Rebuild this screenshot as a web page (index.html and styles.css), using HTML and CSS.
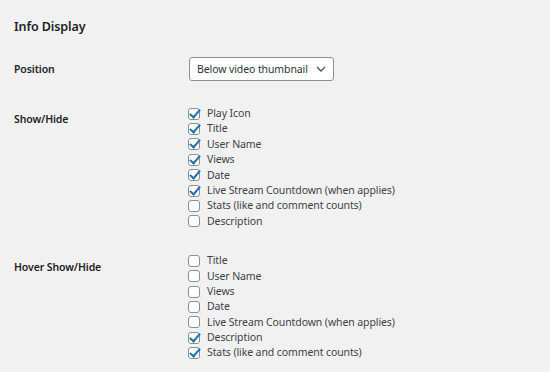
FILE: index.html
```html
<!DOCTYPE html>
<html lang="en">
<head>
    <meta charset="UTF-8">
    <meta name="viewport" content="width=device-width, initial-scale=1.0">
    <title>Info Display</title>
    <link rel="stylesheet" href="styles.css">
</head>
<body>
    <div class="wrap">
        <h2>Info Display</h2>

        <div class="row row-select">
            <div class="label">Position</div>
            <div class="field">
                <div class="select">
                    <span>Below video thumbnail</span>
                    <svg class="chev" width="10" height="6" viewBox="0 0 10 6"><path d="M1 1l4 4 4-4" fill="none" stroke="#50575e" stroke-width="1.4"/></svg>
                </div>
            </div>
        </div>

        <div class="row row-show">
            <div class="label">Show/Hide</div>
            <ul class="checks">
                <li class="on"><i class="box"></i>Play Icon</li>
                <li class="on"><i class="box"></i>Title</li>
                <li class="on"><i class="box"></i>User Name</li>
                <li class="on"><i class="box"></i>Views</li>
                <li class="on"><i class="box"></i>Date</li>
                <li class="on"><i class="box"></i>Live Stream Countdown (when applies)</li>
                <li><i class="box"></i>Stats (like and comment counts)</li>
                <li><i class="box"></i>Description</li>
            </ul>
        </div>

        <div class="row row-hover">
            <div class="label">Hover Show/Hide</div>
            <ul class="checks">
                <li><i class="box"></i>Title</li>
                <li><i class="box"></i>User Name</li>
                <li><i class="box"></i>Views</li>
                <li><i class="box"></i>Date</li>
                <li><i class="box"></i>Live Stream Countdown (when applies)</li>
                <li class="on"><i class="box"></i>Description</li>
                <li class="on"><i class="box"></i>Stats (like and comment counts)</li>
            </ul>
        </div>
    </div>
</body>
</html>
```

FILE: styles.css
```css
* {
    margin: 0;
    padding: 0;
    box-sizing: border-box;
}

body {
    background: #f1f1f1;
    font-family: "Noto Sans", "Open Sans", Arial, sans-serif;
    font-size: 10.5px;
    letter-spacing: -0.1px;
    color: #3c434a;
    overflow: hidden;
}

.wrap {
    padding: 17px 14px 0;
}

h2 {
    font-size: 12.5px;
    font-weight: 600;
    line-height: 20px;
    color: #1d2327;
}

.row {
    display: flex;
}

.label {
    width: 174px;
    flex: none;
    font-weight: 600;
    line-height: 16px;
    color: #1d2327;
}

.row-select {
    margin-top: 20px;
    align-items: center;
}

.select {
    width: 145px;
    height: 24px;
    margin-left: 1px;
    border: 1px solid #8c8f94;
    border-radius: 3px;
    background: #fff;
    display: flex;
    align-items: center;
    justify-content: space-between;
    padding: 0 7px 0 7px;
    color: #2c3338;
}

.row-show {
    margin-top: 25px;
}

.row-show .label {
    padding-top: 5px;
}

.row-hover {
    margin-top: 24px;
}

.row-hover .label {
    padding-top: 6px;
}

.checks {
    list-style: none;
}

.checks li {
    display: flex;
    align-items: center;
    height: 15.4px;
    line-height: 15.4px;
}

.box {
    width: 12px;
    height: 12px;
    margin-right: 7px;
    border: 1px solid #8c8f94;
    border-radius: 3px;
    background: #fff;
    position: relative;
    flex: none;
}

.on .box::after {
    content: "";
    position: absolute;
    left: 3px;
    top: -2px;
    width: 4px;
    height: 9px;
    border-right: 2px solid #2271b1;
    border-bottom: 2px solid #2271b1;
    transform: rotate(40deg);
}
```
